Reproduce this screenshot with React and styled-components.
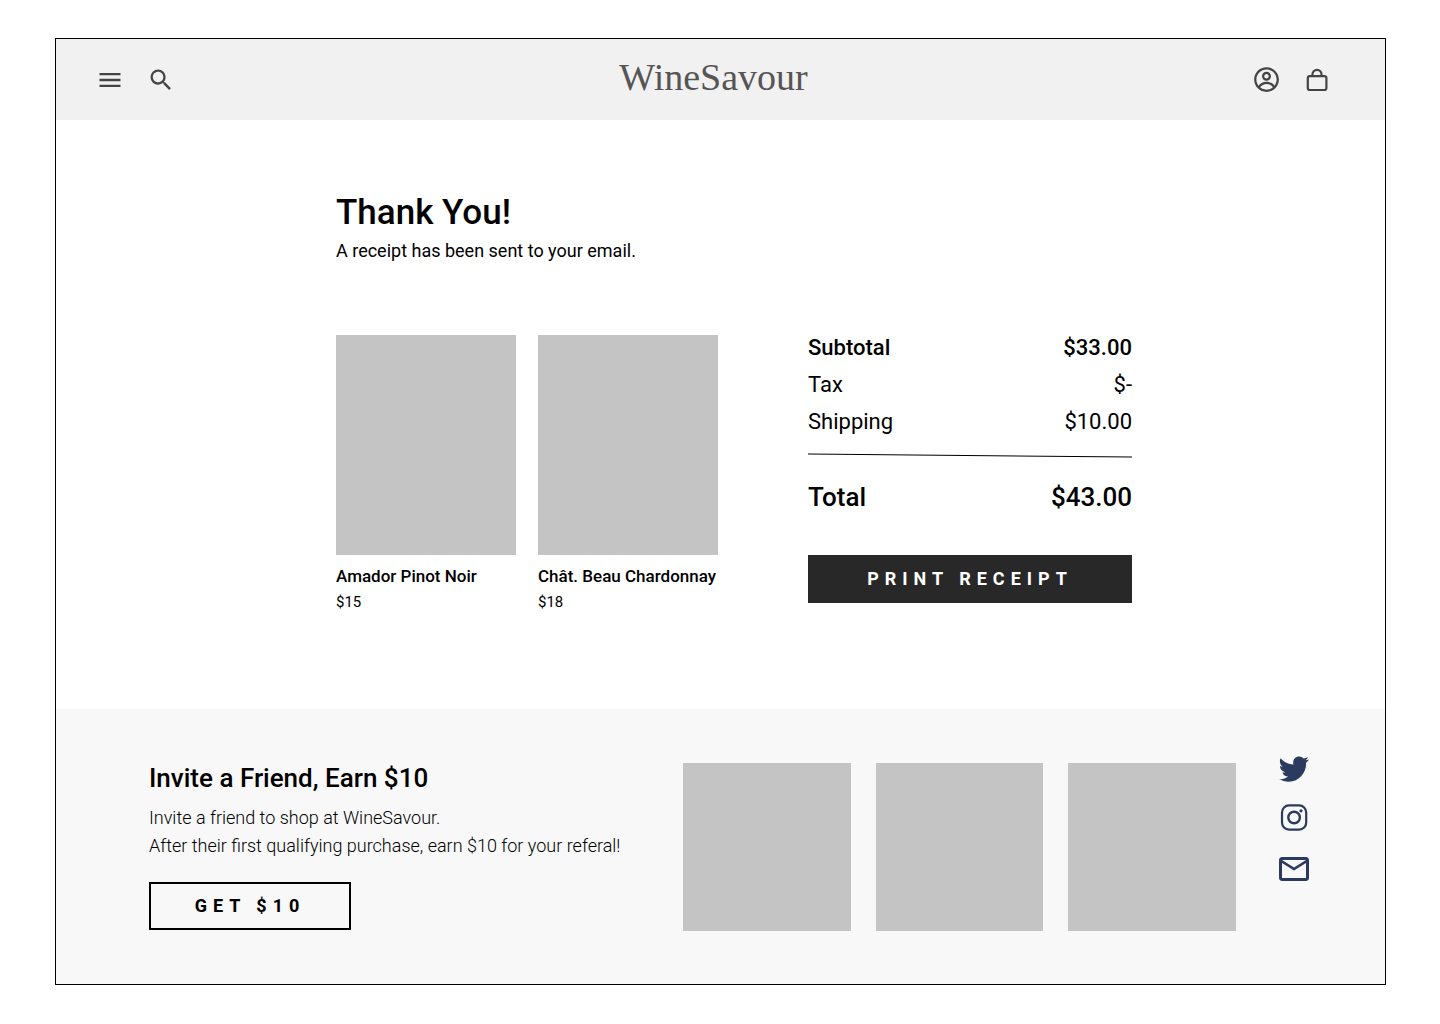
import styled, { createGlobalStyle } from 'styled-components';
import { MdMenu, MdOutlineMail, MdSearch } from 'react-icons/md';
import { CgProfile } from 'react-icons/cg';

const products = [
  { name: 'Amador Pinot Noir', price: '$15' },
  { name: 'Chât. Beau Chardonnay', price: '$18' },
];

const charges = [
  { label: 'Subtotal', value: '$33.00', strong: true },
  { label: 'Tax', value: '$-' },
  { label: 'Shipping', value: '$10.00' },
];

function BagIcon() {
  return (
    <svg width="28" height="28" viewBox="0 0 28 28" fill="none" stroke="currentColor" strokeWidth="2.2">
      <rect x="4.8" y="10.2" width="18.6" height="13.8" rx="2" />
      <path d="M9.4 10V8.8a4.6 4.9 0 0 1 9.2 0V10" />
    </svg>
  );
}

function TwitterIcon() {
  return (
    <svg width="32" height="30" viewBox="0 0 32 30" fill="currentColor">
      <path d="M2.6 3.2C5.8 6.9 10.2 9.2 15.4 9.4C14.3 5 17.3 1.6 21 1.6C22.9 1.6 24.5 2.4 25.6 3.6C27.2 3.3 28.6 2.8 29.9 2C29.5 3.5 28.6 4.5 27.5 5.2C28.7 5.1 29.9 4.8 31 4.4C30.2 5.7 29.2 6.8 28.1 7.7C28.5 17 21.6 26.7 10.8 26.7C7.2 26.7 3.9 25.8 1.2 24.1C4.6 24.4 7.8 23.5 10.1 21.6C7.4 21.5 5.2 19.8 4.4 17.4C5.3 17.6 6.3 17.5 7.1 17.3C4.1 16.6 2 14.1 2 11.1C2.9 11.6 3.9 11.9 4.9 11.9C2.1 9.9 1.1 6.4 2.6 3.2Z" />
    </svg>
  );
}

function InstagramIcon() {
  return (
    <svg width="30" height="30" viewBox="0 0 30 30" fill="none" stroke="currentColor" strokeWidth="2.2">
      <rect x="3" y="2.4" width="24.2" height="24.2" rx="7" />
      <circle cx="15.1" cy="14.5" r="5.8" strokeWidth="2.4" />
      <circle cx="22" cy="7.8" r="1.6" fill="currentColor" stroke="none" />
    </svg>
  );
}

export default function App() {
  return (
    <>
      <GlobalStyle />
      <Page>
        <Header>
          <IconGroup>
            <IconButton type="button" aria-label="Menu">
              <MdMenu size={28} />
            </IconButton>
            <IconButton type="button" aria-label="Search">
              <MdSearch size={28} />
            </IconButton>
          </IconGroup>
          <Logo href="#">WineSavour</Logo>
          <IconGroup $end>
            <IconButton type="button" aria-label="Account">
              <CgProfile size={27} />
            </IconButton>
            <IconButton type="button" aria-label="Shopping bag">
              <BagIcon />
            </IconButton>
          </IconGroup>
        </Header>

        <Main>
          <h1>Thank You!</h1>
          <p>A receipt has been sent to your email.</p>
          <Order>
            <Products>
              {products.map((product) => (
                <Product key={product.name}>
                  <ProductImage />
                  <h2>{product.name}</h2>
                  <p>{product.price}</p>
                </Product>
              ))}
            </Products>
            <Summary>
              <Charges>
                {charges.map((charge) => (
                  <Charge key={charge.label} $strong={charge.strong}>
                    <dt>{charge.label}</dt>
                    <dd>{charge.value}</dd>
                  </Charge>
                ))}
              </Charges>
              <Divider />
              <Total>
                <dt>Total</dt>
                <dd>$43.00</dd>
              </Total>
              <PrintButton type="button">PRINT RECEIPT</PrintButton>
            </Summary>
          </Order>
        </Main>

        <Footer>
          <Invite>
            <h2>Invite a Friend, Earn $10</h2>
            <p>Invite a friend to shop at WineSavour.</p>
            <p>After their first qualifying purchase, earn $10 for your referal!</p>
            <InviteButton type="button">GET $10</InviteButton>
          </Invite>
          <Gallery>
            <GalleryImage />
            <GalleryImage />
            <GalleryImage />
          </Gallery>
          <Social>
            <a href="#" aria-label="Twitter">
              <TwitterIcon />
            </a>
            <a href="#" aria-label="Instagram">
              <InstagramIcon />
            </a>
            <a href="#" aria-label="Email">
              <MdOutlineMail size={36} />
            </a>
          </Social>
        </Footer>
      </Page>
    </>
  );
}

const GlobalStyle = createGlobalStyle`
  * {
    box-sizing: border-box;
    margin: 0;
    padding: 0;
  }
  body {
    background: #ffffff;
    color: #000000;
    font-family: Roboto, sans-serif;
  }
  button {
    font-family: inherit;
    cursor: pointer;
  }
`;

const Page = styled.div`
  margin: 38px 54px 39px 55px;
  border: 1px solid #000000;
`;

const Header = styled.header`
  display: grid;
  grid-template-columns: 1fr auto 1fr;
  align-items: center;
  height: 81px;
  padding: 0 54px 0 40px;
  background: #f1f1f1;
  color: #444444;
`;

const IconGroup = styled.div`
  display: flex;
  align-items: center;
  justify-content: ${({ $end }) => ($end ? 'flex-end' : 'flex-start')};
  gap: 23px;
`;

const IconButton = styled.button`
  display: flex;
  border: none;
  background: none;
  color: inherit;
`;

const Logo = styled.a`
  padding-bottom: 6px;
  color: #555555;
  font-family: 'Liberation Serif', serif;
  font-size: 38px;
  line-height: 44px;
  text-decoration: none;
`;

const Main = styled.main`
  padding: 72px 253px 98px 280px;
  & > h1 {
    font-size: 35px;
    line-height: 42px;
    font-weight: 500;
  }
  & > p {
    margin-top: 6px;
    font-size: 18px;
    line-height: 22px;
  }
`;

const Order = styled.div`
  display: grid;
  grid-template-columns: 382fr 324fr;
  gap: 90px;
  margin-top: 73px;
`;

const Products = styled.div`
  display: grid;
  grid-template-columns: 1fr 1fr;
  gap: 22px;
`;

const Product = styled.article`
  h2 {
    margin-top: 10px;
    font-size: 17px;
    line-height: 22px;
    font-weight: 500;
    white-space: nowrap;
  }
  p {
    margin-top: 6px;
    font-size: 15px;
    line-height: 18px;
  }
`;

const ProductImage = styled.div`
  aspect-ratio: 9 / 11;
  background: #c4c4c4;
`;

const Summary = styled.section`
  display: flex;
  flex-direction: column;
`;

const Charges = styled.dl`
  display: flex;
  flex-direction: column;
  gap: 11px;
`;

const Charge = styled.div`
  display: flex;
  justify-content: space-between;
  font-size: 22px;
  line-height: 26px;
  font-weight: ${({ $strong }) => ($strong ? 500 : 400)};
`;

const Divider = styled.hr`
  height: 1px;
  margin: 20px 0 25px;
  border: none;
  background: #000000;
  transform: skewY(0.5deg);
`;

const Total = styled.dl`
  display: flex;
  justify-content: space-between;
  font-size: 26px;
  line-height: 32px;
  font-weight: 500;
`;

const PrintButton = styled.button`
  height: 48px;
  margin-top: 42px;
  padding-bottom: 2px;
  border: none;
  background: #282828;
  color: #ffffff;
  font-size: 18px;
  font-weight: 700;
  letter-spacing: 6px;
`;

const Footer = styled.footer`
  display: grid;
  grid-template-columns: 534fr 553fr auto;
  align-items: start;
  padding: 46px 73px 53px 93px;
  background: #f8f8f8;
`;

const Invite = styled.section`
  padding-top: 7px;
  h2 {
    margin-bottom: 10px;
    font-size: 26px;
    line-height: 32px;
    font-weight: 500;
  }
  p {
    font-size: 18px;
    line-height: 28px;
    font-weight: 300;
  }
`;

const InviteButton = styled.button`
  width: 202px;
  height: 48px;
  margin-top: 22px;
  padding-bottom: 2px;
  border: 2px solid #000000;
  background: transparent;
  color: #000000;
  font-size: 18px;
  font-weight: 700;
  letter-spacing: 6px;
`;

const Gallery = styled.div`
  display: grid;
  grid-template-columns: repeat(3, 1fr);
  gap: 25px;
  padding-top: 8px;
`;

const GalleryImage = styled.div`
  aspect-ratio: 1;
  background: #c4c4c4;
`;

const Social = styled.nav`
  display: flex;
  flex-direction: column;
  align-items: center;
  gap: 18px;
  margin-left: 40px;
  a {
    display: flex;
    color: #2b3a5f;
  }
`;
